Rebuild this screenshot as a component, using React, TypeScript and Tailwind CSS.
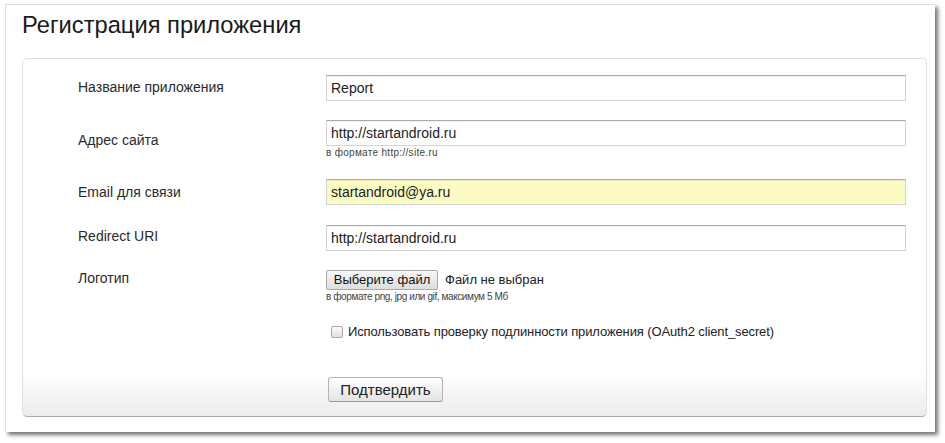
import React from "react";

const font = "font-['Liberation_Sans',Arial,sans-serif]";

function Field({
  label,
  labelPt,
  mt,
  children,
}: {
  label: string;
  labelPt: string;
  mt: string;
  children: React.ReactNode;
}) {
  return (
    <div className={`flex ${mt}`}>
      <div className={`w-[248px] shrink-0 text-[14px] leading-[16px] text-[#2a2a2a] ${labelPt}`}>{label}</div>
      <div className="w-[580px]">{children}</div>
    </div>
  );
}

function TextInput({ value, yellow }: { value: string; yellow?: boolean }) {
  return (
    <input
      readOnly
      value={value}
      className={`block h-[26px] w-full border border-[#d4d4d4] border-t-[#a8a8a8] px-[4px] text-[14px] text-[#222] outline-none shadow-[inset_0_1px_1px_rgba(0,0,0,0.06)] ${
        yellow ? "bg-[#fbfbc4]" : "bg-white"
      }`}
    />
  );
}

function Hint({ children, tight }: { children: React.ReactNode; tight?: boolean }) {
  return (
    <div
      className={`mt-[1px] text-[10px] leading-[12px] text-[#444] ${
        tight ? "tracking-[-0.4px]" : "tracking-[0.3px]"
      }`}
    >
      {children}
    </div>
  );
}

export default function App() {
  return (
    <div className={`${font} bg-white w-[945px] h-[443px] pt-[4px] pl-[5px]`}>
      <div className="w-[930px] h-[428px] bg-white border-l border-t border-[#dcdcdc] shadow-[3px_3px_4px_rgba(0,0,0,0.55)] pl-[16px] pt-[6px]">
        {/* TITLE */}
        <h1 className="text-[23.7px] leading-[28px] text-[#1a1a1a] font-normal">Регистрация приложения</h1>

        {/* FORM PANEL */}
        <div className="mt-[19px] w-[905px] h-[359px] rounded-[5px] border border-[#dedede] border-b-[#a9a9a9] bg-[linear-gradient(to_bottom,#ffffff_0%,#ffffff_88%,#ececec_100%)] pl-[55px] pt-[16px]">
          <Field label="Название приложения" labelPt="pt-[4px]" mt="mt-0">
            <TextInput value="Report" />
          </Field>

          <Field label="Адрес сайта" labelPt="pt-[12px]" mt="mt-[19px]">
            <TextInput value="http://startandroid.ru" />
            <Hint>в формате http://site.ru</Hint>
          </Field>

          <Field label="Email для связи" labelPt="pt-[5px]" mt="mt-[20px]">
            <TextInput value="startandroid@ya.ru" yellow />
          </Field>

          <Field label="Redirect URI" labelPt="pt-[3px]" mt="mt-[20px]">
            <TextInput value="http://startandroid.ru" />
          </Field>

          <Field label="Логотип" labelPt="pt-0" mt="mt-[19px]">
            <div className="flex items-center gap-[7px]">
              <button className="h-[20px] w-[112px] rounded-[2px] border border-[#a9a9a9] bg-[linear-gradient(to_bottom,#f7f7f7,#dedede)] text-[13px] leading-[16px] text-[#111]">
                Выберите файл
              </button>
              <span className="text-[13px] leading-[16px] text-[#222]">Файл не выбран</span>
            </div>
            <Hint tight>в формате png, jpg или gif, максимум 5 Мб</Hint>
          </Field>

          {/* CHECKBOX */}
          <div className="ml-[253px] mt-[21px] flex items-center gap-[5px] text-[13px] leading-[16px] tracking-[-0.12px] text-[#222]">
            <span className="block h-[12px] w-[12px] rounded-[2px] border border-[#a8a8a8] bg-[linear-gradient(to_bottom,#fafafa,#e2e2e2)]" />
            <span>Использовать проверку подлинности приложения (OAuth2 client_secret)</span>
          </div>

          {/* ACTION */}
          <button className="ml-[250px] mt-[37px] h-[25px] w-[115px] rounded-[3px] border border-[#b3b3b3] border-b-[#999] bg-[linear-gradient(to_bottom,#ffffff,#e4e4e4)] text-[15px] leading-[18px] text-[#222]">
            Подтвердить
          </button>
        </div>
      </div>
    </div>
  );
}
